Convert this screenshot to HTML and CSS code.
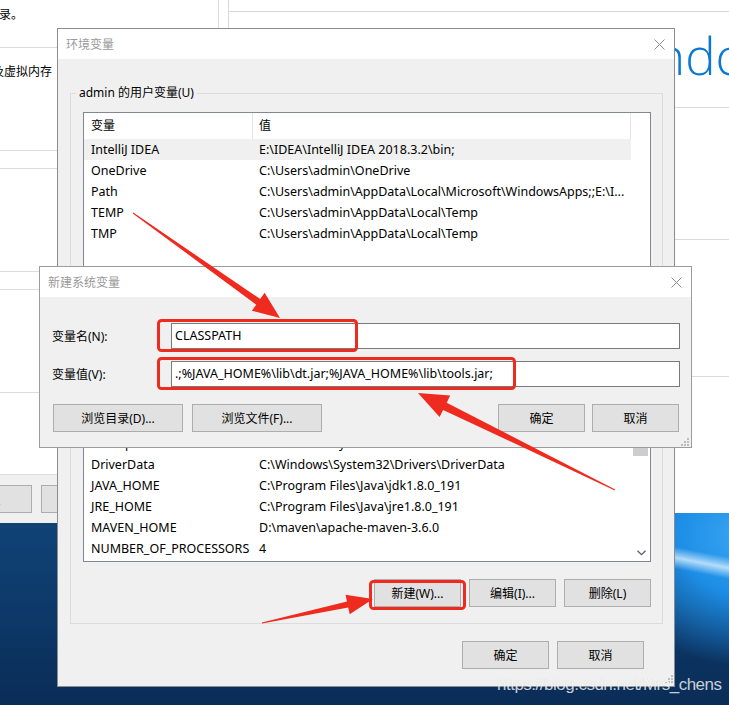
FILE: index.html
```html
<!DOCTYPE html>
<html lang="zh-CN">
<head>
<meta charset="utf-8">
<title>环境变量</title>
<link rel="stylesheet" href="styles.css">
</head>
<body>
<div class="win-left">
  <div class="lw-sec lw-s1"><span class="lw-txt t1">录。</span></div>
  <div class="lw-sec lw-s2"><span class="lw-txt t2">及虚拟内存</span></div>
  <div class="lw-sec lw-s3"></div>
  <div class="lw-sec lw-s4"></div>
  <div class="lw-sec lw-s3"></div>
  <div class="lw-sec lw-s4"></div>
  <div class="lw-sec lw-s5"></div>
  <div class="lw-bar"><span class="btn lw-btn def">确定</span><span class="btn lw-btn"></span></div>
</div>

<div class="win-right">
  <div class="rw-top"></div>
  <div class="rw-brand">Windows</div>
  <div class="rw-line rl1"></div>
  <div class="rw-line rl2"></div>
  <div class="rw-line rl3"></div>
</div>

<div class="dlg env">
  <div class="titlebar"><span>环境变量</span><svg class="close" width="11" height="11" viewBox="0 0 11 11"><path d="M0.5 0.5L10.5 10.5M10.5 0.5L0.5 10.5" stroke="#8a8a8a" stroke-width="1"/></svg></div>
  <div class="env-body">
    <div class="group">
      <div class="glabel">admin 的用户变量(U)</div>
      <div class="list list-user">
        <div class="list-main">
          <div class="hdr"><div class="c1">变量</div><div class="c2">值</div></div>
          <div class="row sel"><div class="c1">IntelliJ IDEA</div><div class="c2">E:\IDEA\IntelliJ IDEA 2018.3.2\bin;</div></div>
          <div class="row"><div class="c1">OneDrive</div><div class="c2">C:\Users\admin\OneDrive</div></div>
          <div class="row"><div class="c1">Path</div><div class="c2">C:\Users\admin\AppData\Local\Microsoft\WindowsApps;;E:\I...</div></div>
          <div class="row"><div class="c1">TEMP</div><div class="c2">C:\Users\admin\AppData\Local\Temp</div></div>
          <div class="row"><div class="c1">TMP</div><div class="c2">C:\Users\admin\AppData\Local\Temp</div></div>
        </div>
      </div>
    </div>
    <div class="group g2">
      <div class="glabel glabel-empty"></div>
      <div class="list list-sys">
        <div class="list-main">
          <div class="hdr"><div class="c1"></div><div class="c2"></div></div>
          <div class="row"><div class="c1">ComSpec</div><div class="c2">C:\Windows\system32\cmd.exe</div></div>
          <div class="row"><div class="c1">DriverData</div><div class="c2">C:\Windows\System32\Drivers\DriverData</div></div>
          <div class="row"><div class="c1">JAVA_HOME</div><div class="c2">C:\Program Files\Java\jdk1.8.0_191</div></div>
          <div class="row"><div class="c1">JRE_HOME</div><div class="c2">C:\Program Files\Java\jre1.8.0_191</div></div>
          <div class="row"><div class="c1">MAVEN_HOME</div><div class="c2">D:\maven\apache-maven-3.6.0</div></div>
          <div class="row"><div class="c1">NUMBER_OF_PROCESSORS</div><div class="c2">4</div></div>
        </div>
        <div class="vscroll">
          <div class="sb-up"></div>
          <div class="sb-thumb"></div>
          <div class="sb-track"></div>
          <div class="sb-down"><svg width="9" height="6" viewBox="0 0 9 6"><path d="M0.5 0.7L4.5 4.7L8.5 0.7" fill="none" stroke="#606060" stroke-width="1.3"/></svg></div>
        </div>
      </div>
      <div class="btnrow"><span class="btn">新建(W)...</span><span class="btn">编辑(I)...</span><span class="btn">删除(L)</span></div>
    </div>
    <div class="okrow"><span class="btn">确定</span><span class="btn">取消</span></div>
  </div>
  <svg class="grip env-grip" width="8" height="8" viewBox="0 0 8 8"><g fill="#bdbdbd"><rect x="6" y="0" width="2" height="2"/><rect x="3" y="3" width="2" height="2"/><rect x="6" y="3" width="2" height="2"/><rect x="0" y="6" width="2" height="2"/><rect x="3" y="6" width="2" height="2"/><rect x="6" y="6" width="2" height="2"/></g></svg>
</div>

<div class="dlg newdlg">
  <div class="titlebar"><span>新建系统变量</span><svg class="close" width="11" height="11" viewBox="0 0 11 11"><path d="M0.5 0.5L10.5 10.5M10.5 0.5L0.5 10.5" stroke="#8a8a8a" stroke-width="1"/></svg></div>
  <div class="nd-body">
    <div class="field"><span>变量名(N):</span><div class="inp">CLASSPATH</div></div>
    <div class="field"><span>变量值(V):</span><div class="inp">.;%JAVA_HOME%\lib\dt.jar;%JAVA_HOME%\lib\tools.jar;</div></div>
    <div class="nd-btns">
      <div class="nd-left"><span class="btn wide">浏览目录(D)...</span><span class="btn wide">浏览文件(F)...</span></div>
      <div class="nd-right"><span class="btn">确定</span><span class="btn">取消</span></div>
    </div>
  </div>
  <svg class="grip nd-grip" width="8" height="8" viewBox="0 0 8 8"><g fill="#bdbdbd"><rect x="6" y="0" width="2" height="2"/><rect x="3" y="3" width="2" height="2"/><rect x="6" y="3" width="2" height="2"/><rect x="0" y="6" width="2" height="2"/><rect x="3" y="6" width="2" height="2"/><rect x="6" y="6" width="2" height="2"/></g></svg>
</div>

<svg class="annot" width="729" height="705" viewBox="0 0 729 705">
  <g fill="none" stroke="#ef2b1f" stroke-width="3">
    <rect x="158.5" y="320.5" width="198" height="30" rx="3"/>
    <rect x="158.5" y="358.5" width="356" height="30" rx="3"/>
    <rect x="370.5" y="581.5" width="94" height="27" rx="3"/>
  </g>
  <g fill="#ef2b1f">
    <polygon points="132.7,213.4 256.2,304.7 251.8,310.8 280,318 264.6,292.8 260.2,299.0 133.3,212.6"/>
    <polygon points="615.2,489.6 446.7,402.7 450.2,395.5 418,393 439.6,417.1 443.1,409.9 614.8,490.4"/>
    <polygon points="262.1,623.5 348.2,607.4 349.7,614.3 373,599 345.5,594.7 347.0,601.6 261.9,622.5"/>
  </g>
</svg>

<div class="wm">https://blog.csdn.net/Mrs_chens</div>
</body>
</html>
```

FILE: styles.css
```css
* { box-sizing: border-box; }
html, body { margin: 0; padding: 0; }
body {
  width: 729px;
  height: 705px;
  overflow: hidden;
  position: relative;
  font-family: "Noto Sans", "Noto Sans CJK SC", sans-serif;
  font-size: 12px;
  color: #000;
  background:
    linear-gradient(191deg, rgba(0,0,0,0) 65.8%, rgba(215,238,255,.8) 67.1%, rgba(0,0,0,0) 68.4%),
    radial-gradient(ellipse 150px 130px at 745px 535px, #3aa6f2 0%, #1d8ee6 45%, rgba(20,120,210,0) 100%),
    linear-gradient(180deg, #14497f 0%, #114478 72%, #0d3a6b 85%, #0a2d57 100%);
}

/* background window, left */
.win-left {
  position: absolute; left: 0; top: 0;
  width: 228px; height: 523px;
  background: #fff;
  display: flex; flex-direction: column;
}
.lw-sec { width: 219px; flex: none; border-right: 1px solid #dcdcdc; border-bottom: 1px solid #dcdcdc; }
.lw-s1 { height: 48px; padding-top: 7px; }
.lw-s2 { height: 103px; padding-top: 16px; }
.lw-s3 { height: 18px; }
.lw-s4 { height: 103px; }
.lw-s5 { height: 82px; }
.lw-txt { display: block; line-height: 16px; white-space: nowrap; }
.t1 { margin-left: -1px; }
.t2 { margin-left: -8px; }
.lw-bar { width: 228px; height: 48px; flex: none; background: #f0f0f0; display: flex; gap: 9px; padding-top: 10px; }
.lw-btn { height: 29px; }
.lw-btn.def { margin-left: -55px; color: #1d63b8; }

/* background window, right */
.win-right {
  position: absolute; left: 228px; top: 0;
  width: 501px; height: 513px;
  background: #fff;
  border-left: 1px solid #d9d9d9;
}
.rw-top { height: 12px; border-bottom: 1px solid #d6d6d6; }
.rw-brand {
  margin: 18px 0 0 369px;
  height: 50px;
  font: 300 51px/1 "Open Sans", sans-serif;
  color: #0a78d4;
  white-space: nowrap;
}
.rw-line { border-bottom: 1px solid #d9d9d9; }
.rl1 { height: 28px; }
.rl2 { height: 132px; }
.rl3 { height: 137px; }

/* dialogs */
.dlg { position: absolute; background: #f0f0f0; display: flex; flex-direction: column; }
.env { left: 57px; top: 28px; width: 618px; height: 659px; border: 1px solid #8c8c8c; }
.newdlg { left: 39px; top: 266px; width: 653px; height: 182px; border: 1px solid #9c9c9c; }
.titlebar {
  height: 30px; flex: none;
  background: #fff;
  display: flex; align-items: center; justify-content: space-between;
  padding: 0 9px 0 8px;
  color: #9a9a9a;
}
.close { display: block; }

.env-body { padding: 34px 11px 0 12px; }
.group { border: 1px solid #dcdcdc; padding: 0 11px 16px 12px; }
.g2 { margin-top: 24px; }
.glabel {
  width: max-content;
  margin: -9px 0 0 -7px;
  padding: 0 3px;
  line-height: 16px;
  background: #f0f0f0;
}
.glabel-empty { width: 80px; height: 16px; }
.list { margin-top: 11px; border: 1px solid #828790; background: #fff; display: flex; font-size: 12.5px; }
.list-user { height: 234px; }
.list-sys { height: 156px; }
.list-main { width: 547px; flex: none; }
.hdr { display: flex; height: 26px; line-height: 26px; }
.hdr .c1, .hdr .c2 { border-right: 1px solid #e5e5e5; font-size: 12px; }
.c1 { width: 169px; flex: none; padding-left: 7px; white-space: nowrap; overflow: hidden; }
.c2 { flex: 1; padding-left: 6px; white-space: nowrap; overflow: hidden; }
.row { display: flex; height: 21px; line-height: 21px; }
.row.sel { background: #f0f0f0; }

.vscroll { width: 17px; margin-left: auto; display: flex; flex-direction: column; background: #fff; }
.sb-up { height: 17px; }
.sb-thumb { height: 32px; margin-right: 2px; background: #cdcdcd; }
.sb-track { flex: 1; }
.sb-down { height: 17px; display: flex; align-items: center; justify-content: center; }
.sb-down svg { display: block; }

.btn {
  width: 87px; height: 28px; flex: none;
  display: flex; align-items: center; justify-content: center;
  background: #e1e1e1;
  border: 1px solid #adadad;
  white-space: nowrap;
}
.btnrow { display: flex; justify-content: flex-end; gap: 8px; margin-top: 17px; }
.okrow { display: flex; justify-content: flex-end; gap: 8px; margin: 17px 19px 0 0; }

.grip { position: absolute; display: block; }
.env-grip { right: 1px; bottom: 3px; }
.nd-grip { right: 2px; bottom: 1px; }

/* new variable dialog */
.nd-body { padding: 26px 11px 0 12px; }
.field { display: grid; grid-template-columns: 119px 1fr; align-items: center; }
.field + .field { margin-top: 12px; }
.inp {
  height: 26px;
  border: 1px solid #7a7a7a;
  background: #fff;
  padding-left: 3px;
  line-height: 24px;
  font-size: 12.5px;
  white-space: nowrap;
  overflow: hidden;
}
.nd-btns { display: flex; justify-content: space-between; margin-top: 17px; padding: 0 1px; }
.nd-left { display: flex; gap: 9px; }
.nd-right { display: flex; gap: 7px; }
.btn.wide { width: 130px; }

/* annotations */
.annot { position: absolute; left: 0; top: 0; pointer-events: none; }
.wm {
  position: absolute; left: 497px; top: 675px;
  font: 17px/20px "Liberation Sans", sans-serif;
  letter-spacing: -0.5px;
  color: rgba(255,255,255,.78);
  text-shadow: 0 0 1px rgba(0,0,0,.15);
  white-space: nowrap;
}
```
